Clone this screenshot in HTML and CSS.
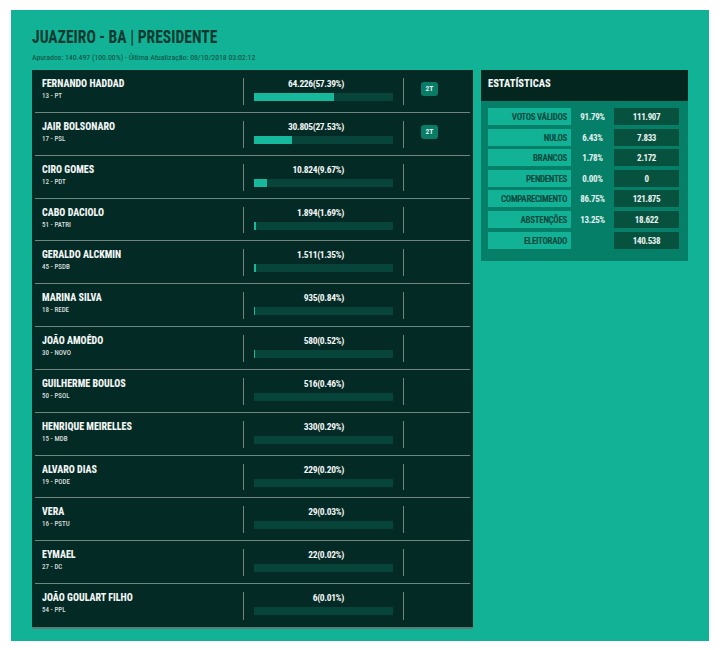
FILE: index.html
```html
<!DOCTYPE html>
<html lang="pt-BR">
<head>
<meta charset="utf-8">
<title>Juazeiro - BA | Presidente</title>
<link rel="stylesheet" href="styles.css">
</head>
<body>
<main class="panel">
  <h1 class="title">JUAZEIRO - BA | PRESIDENTE</h1>
  <p class="subtitle">Apurados: 140.497 (100.00%) - Última Atualização: 08/10/2018 03:02:12</p>
  <div class="columns">
    <section class="candidates">
      <div class="row"><div class="who"><div class="name">FERNANDO HADDAD</div><div class="party">13 - PT</div></div><div class="votes"><div class="count">64.226(57.39%)</div><div class="bar"><div class="fill" style="width:57.39%"></div></div></div><div class="round"><span class="badge">2T</span></div></div>
      <div class="row"><div class="who"><div class="name">JAIR BOLSONARO</div><div class="party">17 - PSL</div></div><div class="votes"><div class="count">30.805(27.53%)</div><div class="bar"><div class="fill" style="width:27.53%"></div></div></div><div class="round"><span class="badge">2T</span></div></div>
      <div class="row"><div class="who"><div class="name">CIRO GOMES</div><div class="party">12 - PDT</div></div><div class="votes"><div class="count">10.824(9.67%)</div><div class="bar"><div class="fill" style="width:9.67%"></div></div></div><div class="round"></div></div>
      <div class="row"><div class="who"><div class="name">CABO DACIOLO</div><div class="party">51 - PATRI</div></div><div class="votes"><div class="count">1.894(1.69%)</div><div class="bar"><div class="fill" style="width:1.69%"></div></div></div><div class="round"></div></div>
      <div class="row"><div class="who"><div class="name">GERALDO ALCKMIN</div><div class="party">45 - PSDB</div></div><div class="votes"><div class="count">1.511(1.35%)</div><div class="bar"><div class="fill" style="width:1.35%"></div></div></div><div class="round"></div></div>
      <div class="row"><div class="who"><div class="name">MARINA SILVA</div><div class="party">18 - REDE</div></div><div class="votes"><div class="count">935(0.84%)</div><div class="bar"><div class="fill" style="width:.84%"></div></div></div><div class="round"></div></div>
      <div class="row"><div class="who"><div class="name">JOÃO AMOÊDO</div><div class="party">30 - NOVO</div></div><div class="votes"><div class="count">580(0.52%)</div><div class="bar"><div class="fill" style="width:.52%"></div></div></div><div class="round"></div></div>
      <div class="row"><div class="who"><div class="name">GUILHERME BOULOS</div><div class="party">50 - PSOL</div></div><div class="votes"><div class="count">516(0.46%)</div><div class="bar"></div></div><div class="round"></div></div>
      <div class="row"><div class="who"><div class="name">HENRIQUE MEIRELLES</div><div class="party">15 - MDB</div></div><div class="votes"><div class="count">330(0.29%)</div><div class="bar"></div></div><div class="round"></div></div>
      <div class="row"><div class="who"><div class="name">ALVARO DIAS</div><div class="party">19 - PODE</div></div><div class="votes"><div class="count">229(0.20%)</div><div class="bar"></div></div><div class="round"></div></div>
      <div class="row"><div class="who"><div class="name">VERA</div><div class="party">16 - PSTU</div></div><div class="votes"><div class="count">29(0.03%)</div><div class="bar"></div></div><div class="round"></div></div>
      <div class="row"><div class="who"><div class="name">EYMAEL</div><div class="party">27 - DC</div></div><div class="votes"><div class="count">22(0.02%)</div><div class="bar"></div></div><div class="round"></div></div>
      <div class="row"><div class="who"><div class="name">JOÃO GOULART FILHO</div><div class="party">54 - PPL</div></div><div class="votes"><div class="count">6(0.01%)</div><div class="bar"></div></div><div class="round"></div></div>
    </section>
    <aside class="stats">
      <h2 class="stats-title">ESTATÍSTICAS</h2>
      <div class="stats-body">
        <div class="stat"><span class="stat-label">VOTOS VÁLIDOS</span><span class="stat-pct">91.79%</span><span class="stat-value">111.907</span></div>
        <div class="stat"><span class="stat-label">NULOS</span><span class="stat-pct">6.43%</span><span class="stat-value">7.833</span></div>
        <div class="stat"><span class="stat-label">BRANCOS</span><span class="stat-pct">1.78%</span><span class="stat-value">2.172</span></div>
        <div class="stat"><span class="stat-label">PENDENTES</span><span class="stat-pct">0.00%</span><span class="stat-value">0</span></div>
        <div class="stat"><span class="stat-label">COMPARECIMENTO</span><span class="stat-pct">86.75%</span><span class="stat-value">121.875</span></div>
        <div class="stat"><span class="stat-label">ABSTENÇÕES</span><span class="stat-pct">13.25%</span><span class="stat-value">18.622</span></div>
        <div class="stat"><span class="stat-label">ELEITORADO</span><span class="stat-pct"></span><span class="stat-value">140.538</span></div>
      </div>
    </aside>
  </div>
</main>
</body>
</html>
```
FILE: styles.css
```css
* { box-sizing: border-box; }
html, body { margin: 0; background: #fff; }
body { padding: 10px 11px 9px; font-family: "Roboto", "Liberation Sans", sans-serif; font-stretch: condensed; }
.panel { width: 698px; height: 631px; background: #12b296; padding: 17px 21px 0; }
.title { margin: 0; font-size: 17.5px; line-height: 20px; font-weight: 700; color: #0c3a30; transform: scaleX(.89); transform-origin: left; white-space: nowrap; }
.subtitle { margin: 6px 0 0; font-size: 7.8px; line-height: 10px; color: #0a4a3d; white-space: nowrap; }
.columns { display: flex; align-items: flex-start; gap: 8px; margin-top: 7px; }
.candidates { width: 441px; background: #042a25; border-bottom: 2px solid #5d7b74; }
.row { display: flex; height: 42.85px; padding: 8px 0 7px; margin: 0 3px; border-bottom: 1px solid #71857f; align-items: stretch; }
.row:last-child { border-bottom: 0; }
.who { width: 209px; padding-left: 7px; border-right: 1px solid #71857f; }
.name { font-size: 10.5px; line-height: 11px; font-weight: 800; color: #f2f6f5; white-space: nowrap; transform: scaleX(.95); transform-origin: left; }
.party { margin-top: 3px; font-size: 7px; line-height: 9px; font-weight: 500; color: #d5dedc; }
.votes { width: 160px; padding: 0 10px; border-right: 1px solid #71857f; }
.count { padding-right: 49px; font-size: 9.5px; line-height: 12px; font-weight: 700; letter-spacing: -.36px; color: #f2f6f5; text-align: right; }
.bar { height: 8px; margin-top: 3px; background: #07443a; }
.fill { height: 100%; background: #17b99c; }
.round { flex: 1; padding: 4px 0 0 17px; }
.badge { display: block; width: 17px; height: 14px; border-radius: 3px; background: #0a7b66; color: #dff0ec; font-size: 7.5px; line-height: 14px; font-weight: 700; text-align: center; }
.stats { width: 207px; height: 191px; background: #067f69; }
.stats-title { margin: 0; height: 31px; background: #03261f; padding-left: 7px; font-size: 10.5px; line-height: 27px; font-weight: 800; color: #f2f6f5; }
.stats-body { display: flex; flex-direction: column; gap: 3.6px; padding: 7px 9px 0 7px; }
.stat { display: flex; height: 17px; font-size: 9px; line-height: 18px; font-weight: 700; letter-spacing: -.35px; }
.stat-label { width: 83px; background: #12b296; color: #0a4a3e; text-align: right; padding-right: 4px; white-space: nowrap; }
.stat-pct { width: 43px; color: #e2f2ee; text-align: center; }
.stat-value { width: 65px; background: #07523f; color: #e9f3f0; text-align: center; }
```
